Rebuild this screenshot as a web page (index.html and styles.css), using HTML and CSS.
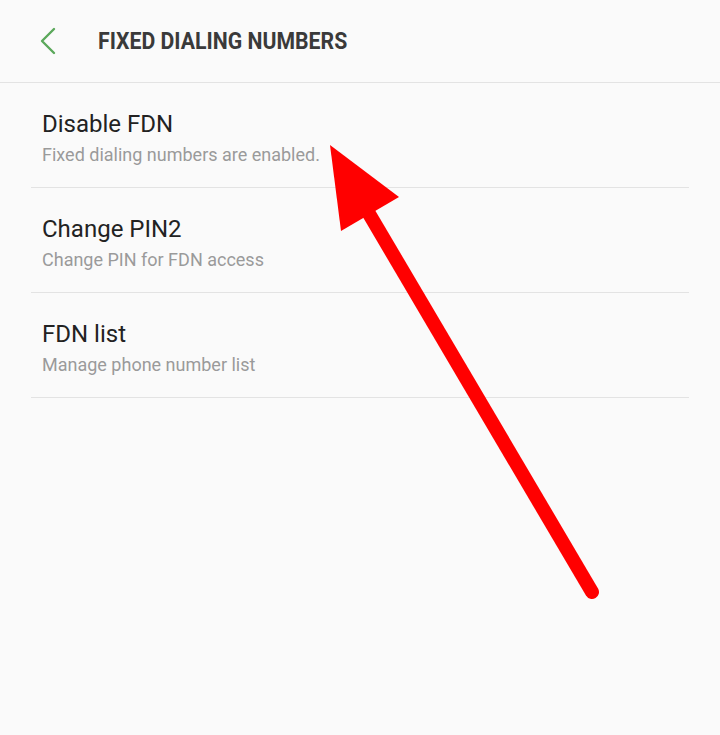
FILE: index.html
```html
<!DOCTYPE html>
<html lang="en">
<head>
  <meta charset="UTF-8">
  <title>Fixed Dialing Numbers</title>
  <link rel="stylesheet" href="styles.css">
</head>
<body>
  <header class="appbar">
    <button class="back" aria-label="Back">
      <svg width="20" height="30" viewBox="0 0 20 30">
        <path d="M16 3 L4 15 L16 27" fill="none" stroke="#5ba85b" stroke-width="2.4" stroke-linecap="round" stroke-linejoin="round"/>
      </svg>
    </button>
    <h1 class="title">FIXED DIALING NUMBERS</h1>
  </header>

  <ul class="list">
    <li class="item">
      <div class="item-title">Disable FDN</div>
      <div class="item-sub">Fixed dialing numbers are enabled.</div>
    </li>
    <li class="item">
      <div class="item-title">Change PIN2</div>
      <div class="item-sub">Change PIN for FDN access</div>
    </li>
    <li class="item">
      <div class="item-title">FDN list</div>
      <div class="item-sub">Manage phone number list</div>
    </li>
  </ul>

  <!-- annotation arrow drawn over the screen -->
  <svg class="arrow" width="720" height="735" viewBox="0 0 720 735">
    <line x1="368" y1="212" x2="592" y2="592" stroke="#ff0000" stroke-width="14" stroke-linecap="round"/>
    <polygon points="330,145 399,197 341,231" fill="#ff0000"/>
  </svg>
</body>
</html>
```

FILE: styles.css
```css
body {
  margin: 0;
  background: #fafafa;
  font-family: Roboto, "Noto Sans", sans-serif;
  width: 720px;
  height: 735px;
  overflow: hidden;
  position: relative;
}
.appbar {
  height: 82px;
  display: flex;
  align-items: center;
  border-bottom: 1px solid #e3e3e3;
}
.back {
  background: none;
  border: none;
  padding: 0;
  margin-left: 38px;
  width: 20px;
  height: 30px;
  display: flex;
}
.title {
  margin: 0 0 0 40px;
  font-size: 24px;
  font-weight: 700;
  color: #3a3a3a;
  transform: scaleX(0.885);
  transform-origin: left center;
}
.list {
  list-style: none;
  margin: 0;
  padding: 0 31px;
}
.item {
  height: 105px;
  box-sizing: border-box;
  border-bottom: 1px solid #e3e3e3;
  padding: 26px 11px 0;
}
.item-title {
  font-size: 24px;
  color: #222;
  line-height: 30px;
}
.item-sub {
  font-size: 18px;
  color: #9a9a9a;
  line-height: 24px;
  margin-top: 4px;
}
.arrow {
  position: absolute;
  left: 0;
  top: 0;
}
```
